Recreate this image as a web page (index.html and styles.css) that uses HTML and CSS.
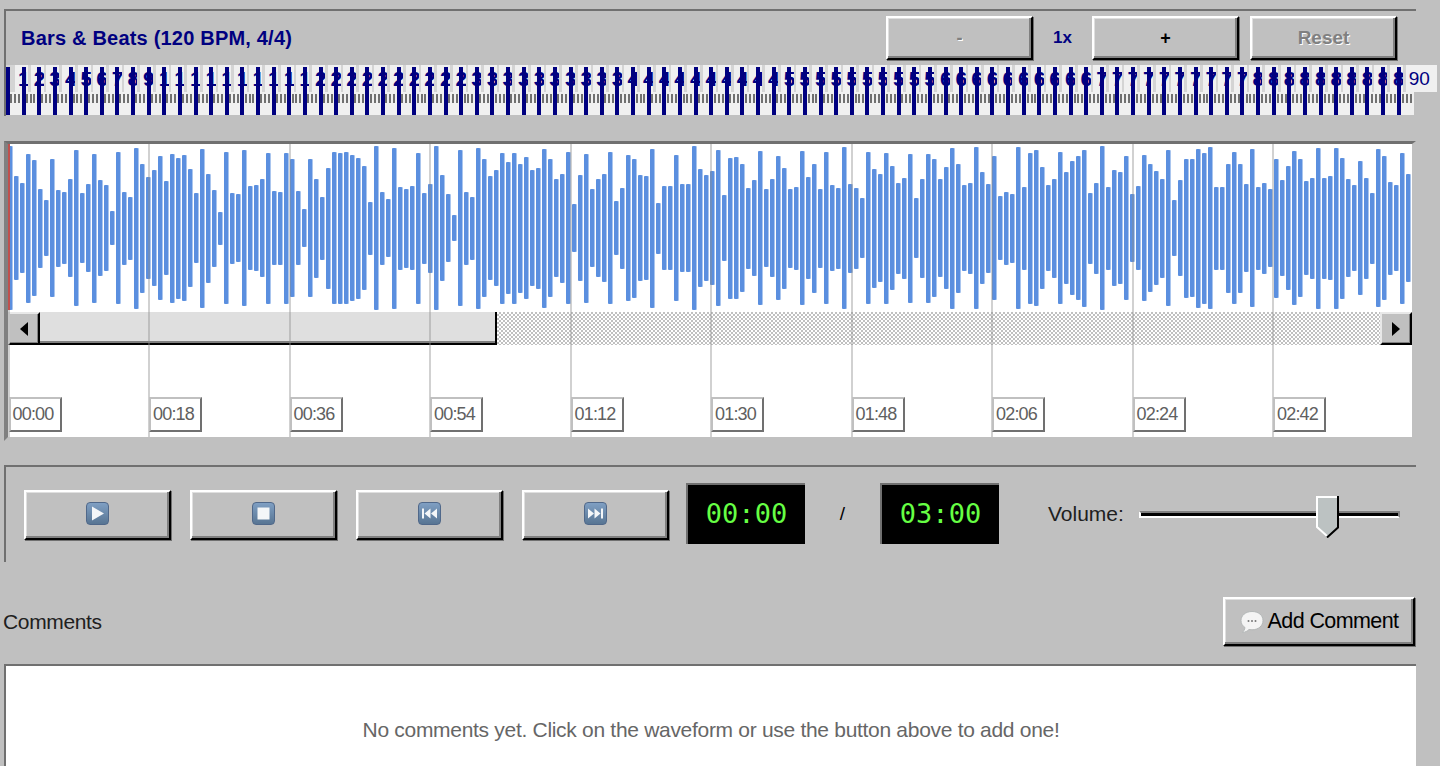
FILE: index.html
```html
<!DOCTYPE html>
<html lang="en">
<head>
  <meta charset="UTF-8" />
  <title>Track Player</title>
  <link rel="stylesheet" href="styles.css">
</head>
<body>
  <section class="panel bars">
    <div class="bars-head">
      <h2 class="bars-title">Bars &amp; Beats (120 BPM, 4/4)</h2>
      <div class="zoom">
        <button class="btn btn-zoom" disabled>-</button>
        <span class="zoom-level">1x</span>
        <button class="btn btn-zoom btn-strong">+</button>
        <button class="btn btn-zoom btn-reset" disabled>Reset</button>
      </div>
    </div>
    <div class="ruler" id="ruler"></div>
  </section>

  <section class="timeline">
    <div class="wave" id="wave"></div>
    <div class="scrollbar">
      <div class="scroll-btn">
        <svg width="8" height="14" viewBox="0 0 8 14"><path d="M8 0V14L0 7Z"/></svg>
      </div>
      <div class="scroll-thumb"></div>
      <div class="scroll-track"></div>
      <div class="scroll-btn">
        <svg width="8" height="14" viewBox="0 0 8 14"><path d="M0 0V14L8 7Z"/></svg>
      </div>
    </div>
    <div class="axis-space"></div>
    <div class="grid" id="grid"></div>
    <div class="playhead"></div>
  </section>

  <section class="panel controls">
    <button class="btn btn-transport">
      <svg class="media-icon" viewBox="0 0 21 21"><path d="M5 3.500 17 10.500 5 17.500Z"/></svg>
    </button>
    <button class="btn btn-transport">
      <svg class="media-icon" viewBox="0 0 21 21"><path d="M4.500 4.500h12v12h-12Z"/></svg>
    </button>
    <button class="btn btn-transport">
      <svg class="media-icon" viewBox="0 0 21 21"><path d="M3 5.500h2v10H3ZM11.500 5.500v10L5.500 10.500ZM18 5.500v10L12 10.500Z"/></svg>
    </button>
    <button class="btn btn-transport">
      <svg class="media-icon" viewBox="0 0 21 21"><path d="M3 5.500v10L9 10.500ZM9.500 5.500v10L15.500 10.500ZM16 5.500h2v10h-2Z"/></svg>
    </button>
    <div class="clock">00:00</div>
    <span class="clock-sep">/</span>
    <div class="clock">03:00</div>
    <span class="volume-label">Volume:</span>
    <div class="slider">
      <svg class="slider-thumb" width="23" height="42" viewBox="0 0 23 42">
        <path d="M1 1H21V31L11 41 1 31Z" fill="#bcc2c2"/>
        <path d="M11 40 1 31V1H21" fill="none" stroke="#fff" stroke-width="2"/>
        <path d="M22 0V31.500L11 41.500" fill="none" stroke="#000" stroke-width="2"/>
      </svg>
    </div>
  </section>

  <div class="comments-head">
    <span class="comments-title">Comments</span>
    <button class="btn btn-comment">
      <svg width="24" height="24" viewBox="0 0 24 24">
        <path d="M12 1.500C5.500 1.500 1 5.500 1 10.500c0 3 1.500 5.500 4 7-.3 2-1.200 3.500-2.500 5 2.800-.3 5-1.400 6.500-3 1 .2 2 .3 3 .3 6.500 0 11-4 11-9.300S18.500 1.500 12 1.500Z" fill="#f4f4f4" stroke="#b4b8b8"/>
        <circle cx="8.500" cy="11" r="1" fill="#777"/><circle cx="12" cy="11" r="1" fill="#777"/><circle cx="15.500" cy="11" r="1" fill="#777"/>
      </svg>
      Add Comment
    </button>
  </div>
  <section class="comments-box">
    <p class="no-comments">No comments yet. Click on the waveform or use the button above to add one!</p>
  </section>

  <script src="script.js"></script>
</body>
</html>
```

FILE: styles.css
```css
html, body {
  margin: 0;
  height: 766px;
  overflow: hidden;
}
body {
  background: #c0c0c0;
  font-family: "Liberation Sans", Arial, sans-serif;
  padding-top: 9px;
  box-sizing: border-box;
}
.panel {
  margin-left: 4px;
  width: 1412px;
  box-sizing: border-box;
  border-top: 2px solid #707070;
  border-left: 2px solid #707070;
}

/* buttons */
.btn {
  box-sizing: border-box;
  border: 2px solid;
  border-color: #fff #000 #000 #fff;
  background: #c0c0c0;
  box-shadow: inset -2px -2px #808080, inset 1px 1px #dfdfdf, 1px 1px #707070;
  font-family: inherit;
  color: #000;
  padding: 0;
}
.btn-zoom {
  width: 147px;
  height: 44px;
  font-size: 18px;
  font-weight: bold;
}
.btn-zoom:disabled {
  color: #808080;
  text-shadow: 1px 1px #fff;
}
.btn-zoom + .btn-zoom {
  margin-left: 11px;
}
.btn-reset {
  font-size: 19px;
}

/* bars and beats */
.bars {
  height: 107px;
  padding-top: 5px;
}
.bars-head {
  display: flex;
  align-items: center;
  justify-content: space-between;
  padding: 0 19px 0 15px;
  margin-bottom: 5px;
}
.bars-title {
  margin: 0;
  font-size: 20px;
  color: #000080;
  letter-spacing: 0.2px;
}
.zoom {
  display: flex;
  align-items: center;
}
.zoom-level {
  width: 59px;
  text-align: center;
  font-size: 17px;
  font-weight: bold;
  color: #000080;
}
.ruler {
  display: flex;
  width: 1408px;
  height: 50px;
  background:
    repeating-linear-gradient(90deg, #707070 0 2px, transparent 2px 3.91px) 4px 29px / 100% 9px no-repeat,
    linear-gradient(#d4d4d4 27px, #f0f0f0 27px);
}
.beat {
  flex: none;
  width: 15.64px;
  position: relative;
}
.beat::after {
  content: "";
  position: absolute;
  left: 0;
  top: 2px;
  bottom: 0;
  width: 4px;
  background: #000080;
}
.beat-num {
  display: block;
  width: 10px;
  height: 27px;
  margin-left: 9px;
  padding-left: 3px;
  overflow: hidden;
  background: #f0f0f0;
  color: #000080;
  font-size: 21px;
  line-height: 27px;
  font-weight: bold;
}
.beat-last .beat-num {
  width: 28px;
  font-size: 19px;
  font-weight: normal;
}

/* waveform */
.timeline {
  position: relative;
  box-sizing: border-box;
  margin: 25px 0 0 4px;
  width: 1412px;
  height: 300px;
  background: #fff;
  border-style: solid;
  border-width: 3px 4px 4px 4px;
  border-color: #707070 #c0c0c0 #c0c0c0 #808080;
}
.wave {
  display: flex;
  align-items: center;
  gap: 2px;
  height: 168px;
}
.wave-bar {
  flex: none;
  width: 4px;
  border-radius: 1px;
  background: #5b8fdf;
  box-shadow: 1px 0 #a9c5ee;
}
.playhead {
  position: absolute;
  left: 0;
  top: 0;
  width: 2px;
  height: 166px;
  background: #c0504d;
}
.scrollbar {
  display: flex;
  height: 33px;
}
.scroll-btn {
  flex: none;
  box-sizing: border-box;
  width: 32px;
  display: flex;
  align-items: center;
  justify-content: center;
  background: #c0c0c0;
  border: 2px solid;
  border-color: #e8e8e8 #000 #000 #e8e8e8;
  box-shadow: inset -1px -1px #808080;
}
.scroll-thumb {
  flex: none;
  width: 457px;
  box-sizing: border-box;
  background: #dfdfdf;
  border-right: 2px solid #000;
  border-bottom: 2px solid #000;
  box-shadow: inset 0 -2px #808080;
}
.scroll-track {
  flex: 1;
  background: repeating-conic-gradient(#c0c0c0 0 25%, #fff 0 50%) 0 0 / 4px 4px;
}
.grid {
  position: absolute;
  top: 0;
  bottom: 0;
  left: -0.5px;
  display: flex;
}
.grid-cell {
  flex: none;
  box-sizing: border-box;
  width: 140.5px;
  display: flex;
  align-items: flex-end;
  padding-bottom: 5px;
  border-left: 2px solid rgba(140, 140, 140, 0.4);
}
.grid-label {
  box-sizing: border-box;
  height: 35px;
  line-height: 31px;
  padding: 0 6px 0 2px;
  margin-left: -1px;
  background: #fff;
  border: 2px solid;
  border-color: #c0c0c0 #707070 #707070 #c0c0c0;
  font-size: 18px;
  letter-spacing: -0.8px;
  color: #606060;
}

/* transport */
.controls {
  display: flex;
  align-items: center;
  margin-top: 24px;
  height: 97px;
  padding: 16px 0 18px 18px;
}
.btn-transport {
  flex: none;
  width: 147px;
  height: 50px;
  margin: 3px 19px 0 0;
  padding-bottom: 3px;
  display: flex;
  align-items: center;
  justify-content: center;
}
.media-icon {
  box-sizing: border-box;
  width: 23px;
  height: 23px;
  background: linear-gradient(#7f9fc3, #587593);
  border: 1px solid #50688a;
  border-radius: 4px;
}
.media-icon path {
  fill: #f4f6f8;
}
.clock {
  flex: none;
  box-sizing: border-box;
  width: 119px;
  height: 61px;
  line-height: 58px;
  background: #000;
  border-top: 2px solid #707070;
  border-left: 2px solid #707070;
  text-align: center;
  color: #66ff44;
  font-family: "DejaVu Sans Mono", monospace;
  font-size: 27px;
}
.btn-transport + .clock {
  margin-left: -2px;
}
.clock-sep {
  flex: none;
  width: 75px;
  text-align: center;
  font-size: 19px;
}
.volume-label {
  flex: none;
  width: 91px;
  margin-left: 49px;
  font-size: 21px;
  color: #202020;
}
.slider {
  position: relative;
  flex: none;
  box-sizing: border-box;
  width: 261px;
  height: 7px;
  margin-top: 2px;
  background: #000;
  border: 2px solid;
  border-color: #808080 #808080 #fff #fff;
}
.slider-thumb {
  position: absolute;
  left: 175px;
  top: -17px;
}

/* comments */
.comments-head {
  display: flex;
  align-items: center;
  justify-content: space-between;
  margin: 35px 0 0 3px;
  width: 1412px;
}
.comments-title {
  font-size: 21px;
  letter-spacing: -0.35px;
  color: #202020;
}
.btn-comment {
  width: 192px;
  height: 49px;
  display: flex;
  align-items: center;
  justify-content: center;
  gap: 4px;
  font-size: 21.5px;
  letter-spacing: -0.6px;
}
.comments-box {
  box-sizing: border-box;
  margin: 18px 0 0 4px;
  width: 1412px;
  height: 102px;
  background: #fff;
  border-top: 2px solid #707070;
  border-left: 2px solid #707070;
}
.no-comments {
  margin: 0;
  padding-top: 51px;
  text-align: center;
  color: #666;
  font-size: 21px;
  letter-spacing: -0.3px;
  line-height: 26px;
}
```

FILE: script.js
```js
// bar heights read off the track, in px
const peaks = [164,104,90,149,136,79,56,138,77,72,98,156,70,88,149,96,86,34,152,73,63,161,129,102,116,144,94,149,141,146,118,70,159,109,77,33,152,71,68,156,84,86,98,151,74,73,151,138,74,
  38,138,99,63,121,152,151,152,146,141,124,53,164,73,58,161,83,79,84,151,71,89,164,106,68,26,156,73,63,161,138,104,116,151,132,151,129,142,116,121,159,138,98,109,152,48,106,149,78,98,108,152,54,81,146,139,106,104,159,51,84,84,146,88,88,164,118,106,114,156,66,141,142,128,81,96,154,78,98,144,121,79,83,154,102,129,79,152,86,81,162,89,
  81,60,152,119,108,151,124,91,101,149,60,99,149,138,98,122,161,129,86,91,162,112,89,144,64,73,69,162,83,151,156,122,86,99,152,112,134,144,157,71,91,164,83,116,112,144,68,84,146,128,114,99,156,56,96,139,138,159,151,162,83,83,129,152,129,88,158,83,91,78,139,96,124,154,138,94,101,161,101,104,161,141,98,86,134,101,71,158,144,93,86,151,108];

const wave = document.getElementById("wave");
peaks.slice(0, 234).forEach(function (h) {
  const bar = document.createElement("div");
  bar.className = "wave-bar";
  bar.style.height = h + "px";
  wave.appendChild(bar);
});

const ruler = document.getElementById("ruler");
for (let i = 1; i <= 90; i++) {
  const beat = document.createElement("div");
  beat.className = i === 90 ? "beat beat-last" : "beat";
  beat.innerHTML = `<span class="beat-num">${i}</span>`;
  ruler.appendChild(beat);
}

const grid = document.getElementById("grid");
for (let i = 0; i < 10; i++) {
  const secs = i * 18;
  const mm = String(Math.floor(secs / 60)).padStart(2, "0");
  const ss = String(secs % 60).padStart(2, "0");
  grid.innerHTML += `<div class="grid-cell"><span class="grid-label">${mm}:${ss}</span></div>`;
}
```
